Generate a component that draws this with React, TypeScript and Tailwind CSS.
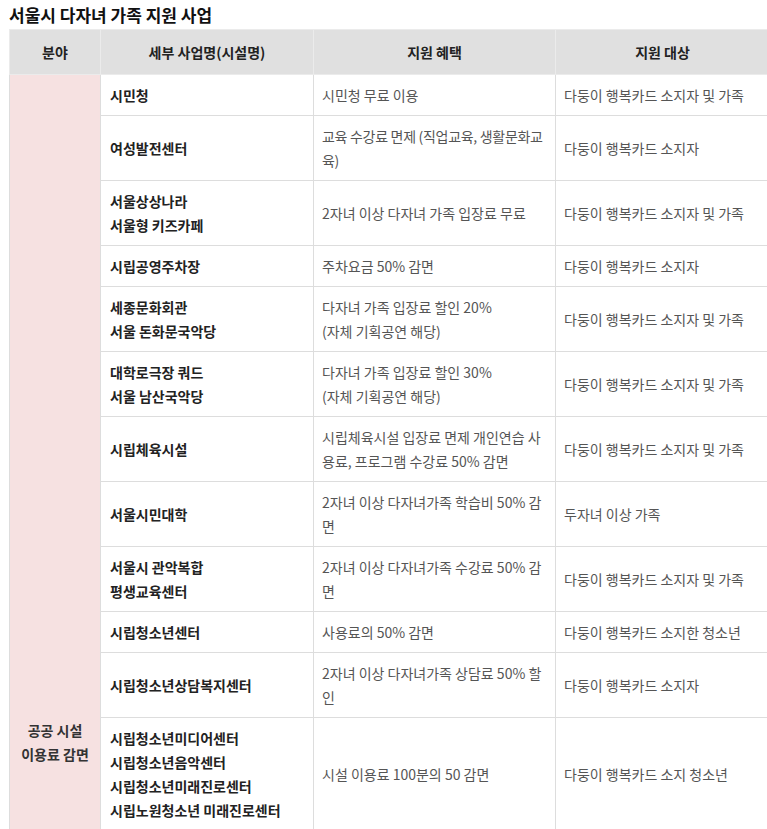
const font = { fontFamily: '"Noto Sans CJK KR", "Noto Sans", sans-serif' }

interface Row {
  name: string[]
  benefit: string
  target: string
  tight?: boolean
}

const rows: Row[] = [
  { name: ['시민청'], benefit: '시민청 무료 이용', target: '다둥이 행복카드 소지자 및 가족' },
  { name: ['여성발전센터'], benefit: '교육 수강료 면제 (직업교육, 생활문화교육)', target: '다둥이 행복카드 소지자', tight: true },
  { name: ['서울상상나라', '서울형 키즈카페'], benefit: '2자녀 이상 다자녀 가족 입장료 무료', target: '다둥이 행복카드 소지자 및 가족' },
  { name: ['시립공영주차장'], benefit: '주차요금 50% 감면', target: '다둥이 행복카드 소지자' },
  { name: ['세종문화회관', '서울 돈화문국악당'], benefit: '다자녀 가족 입장료 할인 20%\n(자체 기획공연 해당)', target: '다둥이 행복카드 소지자 및 가족' },
  { name: ['대학로극장 쿼드', '서울 남산국악당'], benefit: '다자녀 가족 입장료 할인 30%\n(자체 기획공연 해당)', target: '다둥이 행복카드 소지자 및 가족' },
  { name: ['시립체육시설'], benefit: '시립체육시설 입장료 면제 개인연습 사용료, 프로그램 수강료 50% 감면', target: '다둥이 행복카드 소지자 및 가족' },
  { name: ['서울시민대학'], benefit: '2자녀 이상 다자녀가족 학습비 50% 감면', target: '두자녀 이상 가족' },
  { name: ['서울시 관악복합', '평생교육센터'], benefit: '2자녀 이상 다자녀가족 수강료 50% 감면', target: '다둥이 행복카드 소지자 및 가족' },
  { name: ['시립청소년센터'], benefit: '사용료의 50% 감면', target: '다둥이 행복카드 소지한 청소년' },
  { name: ['시립청소년상담복지센터'], benefit: '2자녀 이상 다자녀가족 상담료 50% 할인', target: '다둥이 행복카드 소지자' },
  {
    name: ['시립청소년미디어센터', '시립청소년음악센터', '시립청소년미래진로센터', '시립노원청소년 미래진로센터'],
    benefit: '시설 이용료 100분의 50 감면',
    target: '다둥이 행복카드 소지 청소년',
  },
  { name: ['서울대공원', '서울어린이대공원'], benefit: '다자녀 가족 입장료 50% 감면\n(자녀 포함 가족 전체)', target: '다둥이 행복카드 소지자 및 가족' },
  { name: ['서울시립미술관'], benefit: '유료 전시 관람료 50% 감면', target: '다둥이 행복카드 소지자 및 가족' },
  { name: ['서울역사박물관', '서울생활사박물관'], benefit: '유료 기획전시 관람료 50% 감면\n(교육 프로그램 포함)', target: '다둥이 행복카드 소지자 및 가족' },
  { name: ['서울식물원'], benefit: '입장료 50% 감면', target: '다둥이 행복카드 소지자 및 가족' },
  { name: ['서울시립과학관', '서울상상나라 교육'], benefit: '교육 프로그램 수강료 50% 감면\n(일부 프로그램 제외)', target: '다둥이 행복카드 소지자 및 가족' },
  { name: ['한강공원 수영장', '한강공원 물놀이장'], benefit: '입장료 50% 감면\n(하절기 운영 기간)', target: '다둥이 행복카드 소지자 및 가족' },
  { name: ['시립 캠핑장', '난지·중랑 캠핑장'], benefit: '캠핑장 이용료 50% 감면\n(성수기 제외)', target: '다둥이 행복카드 소지자' },
  { name: ['서울시 공공자전거'], benefit: '정기권 요금 50% 감면', target: '다둥이 행복카드 소지자' },
  { name: ['시립 도서관', '평생학습관'], benefit: '유료 강좌 수강료 50% 감면\n(자체 운영 강좌 해당)', target: '다둥이 행복카드 소지자 및 가족' },
  { name: ['서울시 청소년수련관', '서울시 청소년문화의집'], benefit: '수련 프로그램 참가비 50% 감면\n(숙박 프로그램 포함)', target: '다둥이 행복카드 소지자 및 가족' },
]

export default function App() {
  return (
    <div className="w-[767px] overflow-hidden bg-white text-[#222]" style={font}>
      <h1 className="pl-[9px] h-[29px] leading-[29px] text-[17px] font-bold text-[#111]">
        서울시 다자녀 가족 지원 사업
      </h1>
      <table className="ml-[9px] w-[760px] border-collapse table-fixed text-[14px]">
        <colgroup>
          <col className="w-[91px]" />
          <col className="w-[213px]" />
          <col className="w-[242px]" />
          <col className="w-[214px]" />
        </colgroup>
        <thead>
          <tr className="bg-[#e0e0e0]">
            <th className="border border-[#ebebeb] py-[10px] leading-6 font-bold">분야</th>
            <th className="border border-[#ebebeb] py-[10px] leading-6 font-bold">세부 사업명(시설명)</th>
            <th className="border border-[#ebebeb] py-[10px] leading-6 font-bold">지원 혜택</th>
            <th className="border border-[#ebebeb] py-[10px] leading-6 font-bold">지원 대상</th>
          </tr>
        </thead>
        <tbody>
          {rows.map((row, i) => (
            <tr key={i}>
              {i === 0 && (
                <td
                  rowSpan={rows.length}
                  className="border border-[#dddddd] bg-[#f6e1e1] text-center align-middle leading-6 font-bold text-[#333]"
                >
                  공공 시설
                  <br />
                  이용료 감면
                </td>
              )}
              <td className="border border-[#dddddd] pl-[9px] pr-2 py-2 leading-6 font-bold text-[#222]">
                {row.name.map((n) => (
                  <div key={n}>{n}</div>
                ))}
              </td>
              <td
                className={`border border-[#dddddd] px-2 py-2 leading-6 text-[#555] whitespace-pre-line ${
                  row.tight ? 'tracking-[-0.3px]' : ''
                }`}
              >
                {row.benefit}
              </td>
              <td className="border border-[#dddddd] px-2 py-2 leading-6 text-[#555]">{row.target}</td>
            </tr>
          ))}
        </tbody>
      </table>
    </div>
  )
}
